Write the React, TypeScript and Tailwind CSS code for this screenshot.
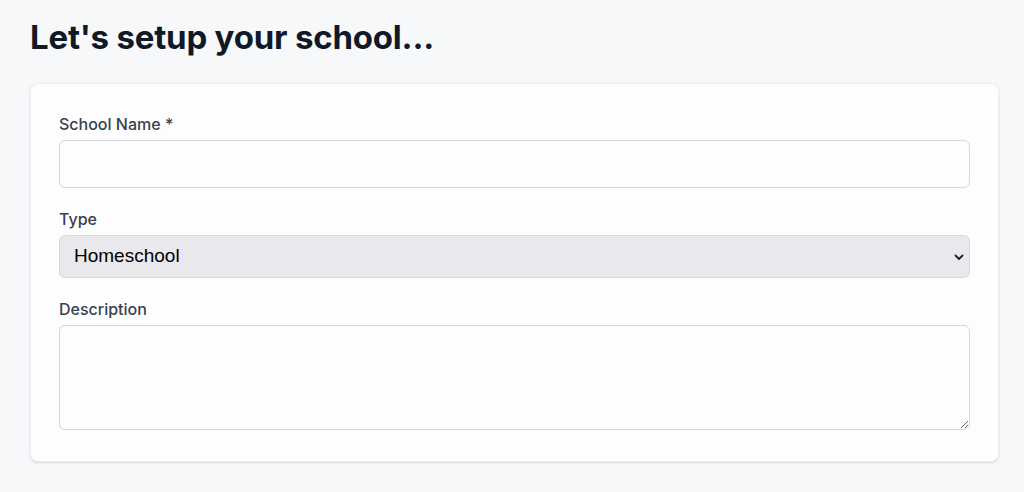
import React from 'react';

const labelCls = "block text-[16px] leading-6 font-medium text-[#374151] mb-1";

const App: React.FC = () => {
  return (
    <div className="min-h-[492px] bg-[#f7f8fa] pl-[30px] pr-[25px] pt-[17px] pb-8" style={{ fontFamily: 'Inter, "Noto Sans", sans-serif' }}>
      <h1 className="text-[33px] leading-[40px] font-bold text-[#111827] tracking-[-0.2px] mb-[26px]">Let's setup your school...</h1>
      <div className="bg-[#fdfdfd] rounded-lg border border-[#eceef1] shadow-sm px-7 pt-7 pb-[31px]">
        <div>
          <label className={labelCls}>School Name *</label>
          <input type="text" className="block w-full h-12 rounded-md border border-[#d4d6da] bg-[#fdfdfd] px-4 outline-none" />
        </div>
        <div className="mt-[19px]">
          <label className={labelCls}>Type</label>
          <div className="relative">
            <select
              defaultValue="Homeschool"
              className="block w-full h-[43px] appearance-none rounded-md border border-[#d8d8dd] bg-[#e9e8ed] pl-[14px] pr-10 text-[19px] text-black outline-none"
              style={{ fontFamily: '"Liberation Sans", Arial, sans-serif' }}
            >
              <option>Homeschool</option>
              <option>Co-op</option>
              <option>Private School</option>
            </select>
            <svg className="pointer-events-none absolute right-[5px] top-1/2 -translate-y-1/2" width="12" height="12" viewBox="0 0 12 12" fill="none">
              <path d="M2.5 4.5 6 8l3.5-3.5" stroke="#1f1f1f" strokeWidth="1.8" strokeLinecap="round" strokeLinejoin="round" />
            </svg>
          </div>
        </div>
        <div className="mt-[19px]">
          <label className={labelCls}>Description</label>
          <textarea className="block w-full h-[105px] rounded-md border border-[#d4d6da] bg-[#fdfdfd] px-4 py-2 outline-none" />
        </div>
      </div>
    </div>
  );
};

export default App;
